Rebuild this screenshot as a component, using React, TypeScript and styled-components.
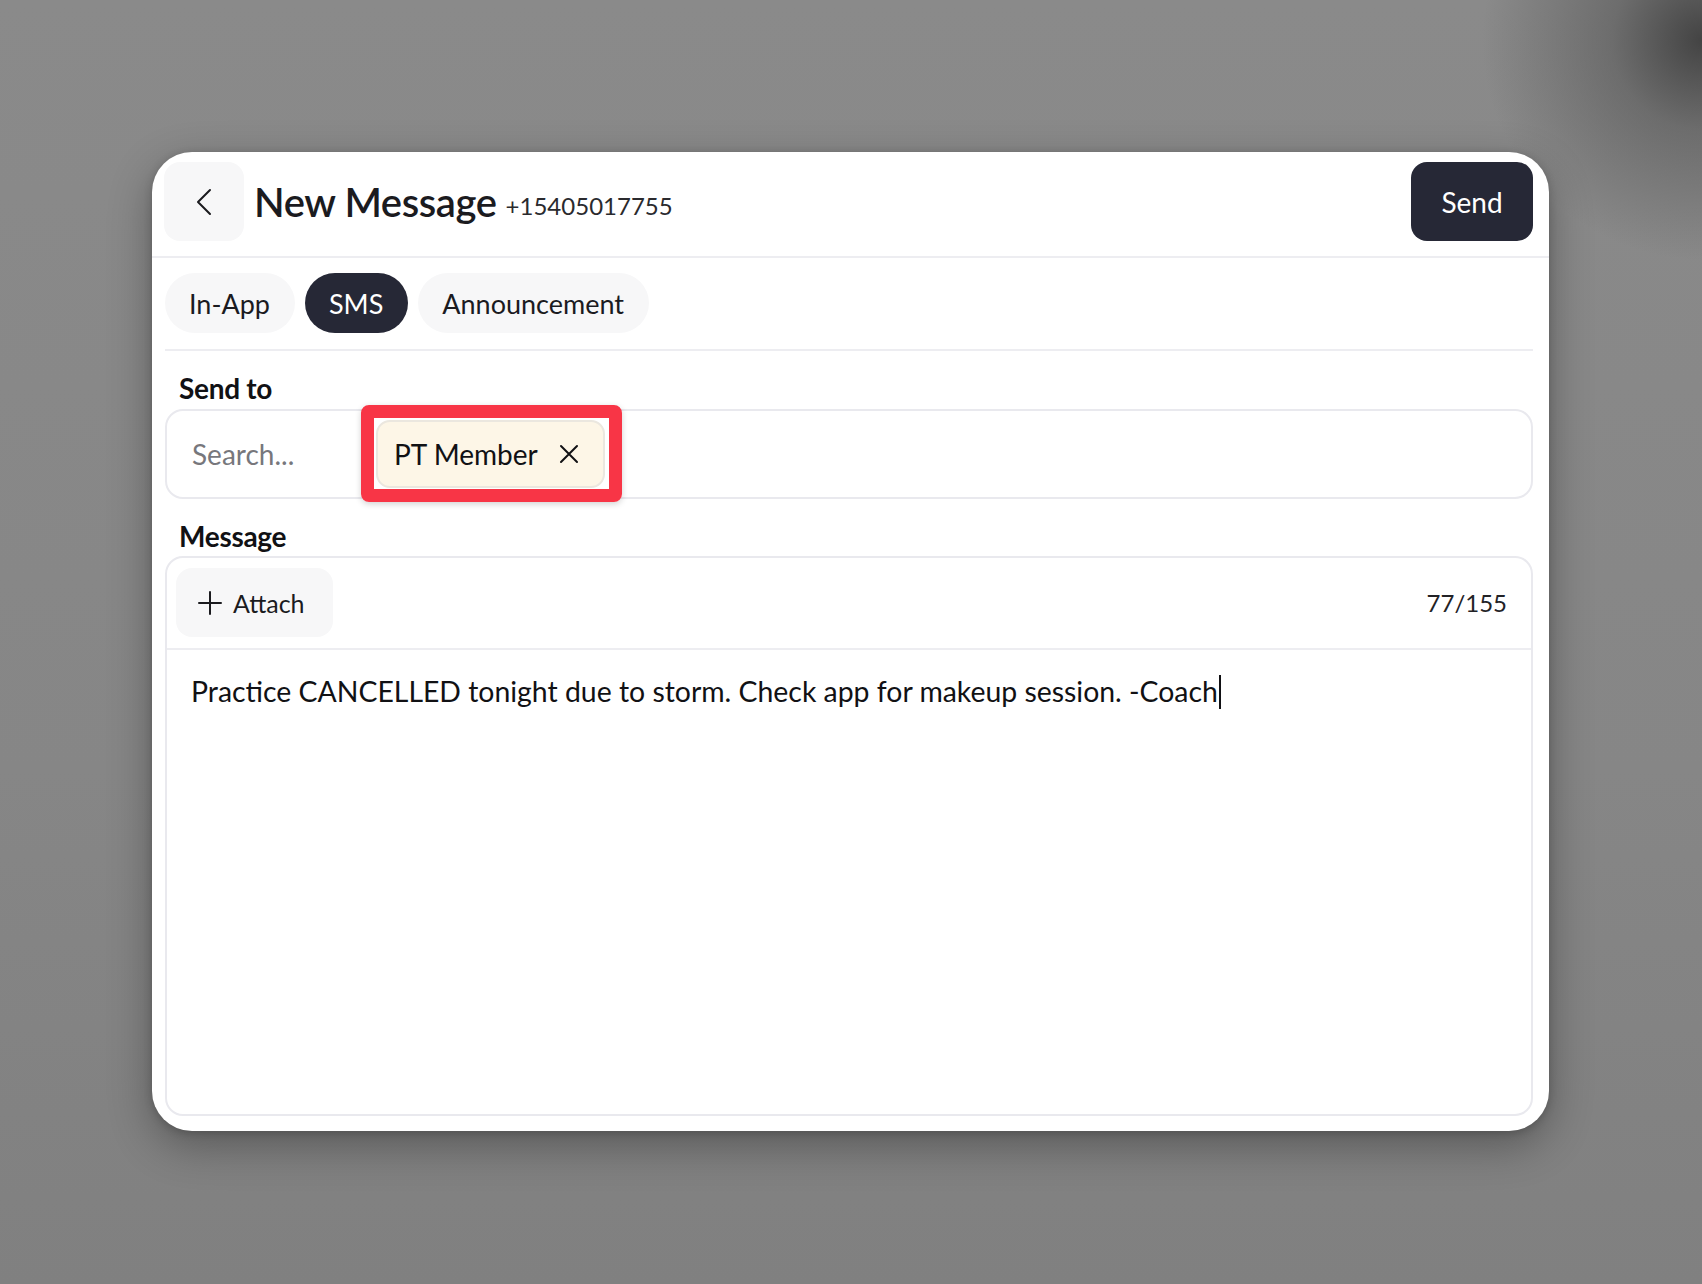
import React from 'react';
import styled, { createGlobalStyle } from 'styled-components';

const GlobalStyle = createGlobalStyle`
  html, body {
    margin: 0;
    padding: 0;
  }
  body {
    font-family: Lato, "Noto Sans", "Liberation Sans", sans-serif;
    color: #1b1b1f;
    background: #888888;
  }
  * {
    box-sizing: border-box;
  }
`;

const Backdrop = styled.div`
  min-height: 1284px;
  padding: 152px 0 0 152px;
  background:
    radial-gradient(circle at 1702px 40px, rgba(60, 60, 60, 0.9) 0, rgba(80, 80, 80, 0.5) 90px, rgba(136, 136, 136, 0) 220px),
    linear-gradient(180deg, #8a8a8a 0%, #868686 60%, #808080 100%);
`;

const Card = styled.div`
  width: 1397px;
  height: 979px;
  background: #ffffff;
  border-radius: 40px;
  box-shadow: 0 14px 44px rgba(0, 0, 0, 0.32), 0 2px 8px rgba(0, 0, 0, 0.18);
  display: flex;
  flex-direction: column;
  overflow: hidden;
`;

const Header = styled.header`
  display: flex;
  align-items: center;
  padding: 10px 16px 15px 12px;
  border-bottom: 2px solid #ededf1;
`;

const IconButton = styled.button`
  width: 80px;
  height: 79px;
  border: none;
  border-radius: 16px;
  background: #f7f7f8;
  display: flex;
  align-items: center;
  justify-content: center;
  padding: 0;
  cursor: pointer;
`;

const Title = styled.h1`
  margin: 0 0 0 10px;
  font-size: 40px;
  font-weight: 600;
  letter-spacing: -0.4px;
  color: #1b1b1f;
`;

const Phone = styled.span`
  margin-left: 9px;
  margin-top: 8px;
  font-size: 24px;
  color: #2a2a2e;
`;

const SendButton = styled.button`
  margin-left: auto;
  width: 122px;
  height: 79px;
  border: none;
  border-radius: 16px;
  background: #262836;
  color: #ffffff;
  font-family: inherit;
  font-size: 28px;
  cursor: pointer;
`;

const Body = styled.div`
  flex: 1;
  display: flex;
  flex-direction: column;
  padding: 0 16px 15px 13px;
`;

const Tabs = styled.div`
  display: flex;
  gap: 10px;
  padding: 15px 0 16px;
  border-bottom: 2px solid #ededf1;
`;

const Tab = styled.button<{ $active?: boolean }>`
  height: 60px;
  padding: 0 25px 0 24px;
  border: none;
  border-radius: 30px;
  font-family: inherit;
  font-size: 27px;
  background: ${(p) => (p.$active ? '#262836' : '#f7f7f8')};
  color: ${(p) => (p.$active ? '#ffffff' : '#1b1b1f')};
  cursor: pointer;
`;

const Label = styled.label<{ $top: number }>`
  display: block;
  margin: ${(p) => p.$top}px 0 3px 14px;
  font-size: 28px;
  font-weight: 700;
  letter-spacing: -0.3px;
  line-height: 1.2;
  color: #111114;
`;

const RecipientBox = styled.div`
  height: 90px;
  display: flex;
  align-items: center;
  gap: 24px;
  padding-left: 25px;
  border: 2px solid #e9e9ee;
  border-radius: 18px;
`;

const SearchInput = styled.input`
  width: 160px;
  border: none;
  outline: none;
  padding: 0;
  font-family: inherit;
  font-size: 28px;
  color: #1b1b1f;
  background: transparent;
  &::placeholder {
    color: #77777c;
  }
`;

const Chip = styled.span`
  position: relative;
  height: 68px;
  display: inline-flex;
  align-items: center;
  gap: 21px;
  padding: 0 24px 0 16px;
  background: #fdf6e7;
  border: 2px solid #ebe7df;
  border-radius: 14px;
  font-size: 28px;
  color: #111114;

  &::after {
    content: '';
    position: absolute;
    top: -17px;
    left: -17px;
    right: -19px;
    bottom: -16px;
    border: 13px solid #f83546;
    border-radius: 8px;
    box-shadow: 0 2px 6px rgba(0, 0, 0, 0.18);
    pointer-events: none;
  }
`;

const MessageBox = styled.div`
  flex: 1;
  display: flex;
  flex-direction: column;
  border: 2px solid #e9e9ee;
  border-radius: 18px;
`;

const Toolbar = styled.div`
  display: flex;
  align-items: center;
  justify-content: space-between;
  padding: 10px 24px 11px 9px;
  border-bottom: 2px solid #ededf1;
`;

const AttachButton = styled.button`
  width: 157px;
  height: 69px;
  display: flex;
  align-items: center;
  gap: 11px;
  padding: 0 0 0 22px;
  border: none;
  border-radius: 16px;
  background: #f7f7f8;
  font-family: inherit;
  font-size: 25px;
  color: #1b1b1f;
  cursor: pointer;
`;

const Counter = styled.span`
  font-size: 24px;
  color: #222226;
`;

const MessageText = styled.div`
  padding: 22px 24px;
  font-size: 28.4px;
  line-height: 1.4;
  color: #111114;
`;

const Caret = styled.span`
  display: inline-block;
  width: 2px;
  height: 34px;
  margin-left: 1px;
  vertical-align: -7px;
  background: #111114;
`;

const ChevronLeft = () => (
  <svg width="18" height="28" viewBox="0 0 18 28" fill="none">
    <polyline points="15,2 3,14 15,26" stroke="#1b1b1f" strokeWidth="2" strokeLinecap="round" strokeLinejoin="round" />
  </svg>
);

const CloseIcon = () => (
  <svg width="20" height="20" viewBox="0 0 20 20" fill="none">
    <path d="M2 2 L18 18 M18 2 L2 18" stroke="#111114" strokeWidth="2" strokeLinecap="round" />
  </svg>
);

const PlusIcon = () => (
  <svg width="24" height="24" viewBox="0 0 24 24" fill="none">
    <path d="M12 1 V23 M1 12 H23" stroke="#1b1b1f" strokeWidth="2" strokeLinecap="round" />
  </svg>
);

const tabs = ['In-App', 'SMS', 'Announcement'];

const App = () => {
  const text = 'Practice CANCELLED tonight due to storm. Check app for makeup session. -Coach';

  return (
    <>
      <GlobalStyle />
      <Backdrop>
        <Card>
          <Header>
            <IconButton aria-label="Back">
              <ChevronLeft />
            </IconButton>
            <Title>New Message</Title>
            <Phone>+15405017755</Phone>
            <SendButton>Send</SendButton>
          </Header>
          <Body>
            <Tabs>
              {tabs.map((t) => (
                <Tab key={t} $active={t === 'SMS'}>
                  {t}
                </Tab>
              ))}
            </Tabs>
            <Label $top={21}>Send to</Label>
            <RecipientBox>
              <SearchInput placeholder="Search..." />
              <Chip>
                PT Member
                <CloseIcon />
              </Chip>
            </RecipientBox>
            <Label $top={21}>Message</Label>
            <MessageBox>
              <Toolbar>
                <AttachButton>
                  <PlusIcon />
                  Attach
                </AttachButton>
                <Counter>{text.length}/155</Counter>
              </Toolbar>
              <MessageText>
                {text}
                <Caret />
              </MessageText>
            </MessageBox>
          </Body>
        </Card>
      </Backdrop>
    </>
  );
};

export default App;
